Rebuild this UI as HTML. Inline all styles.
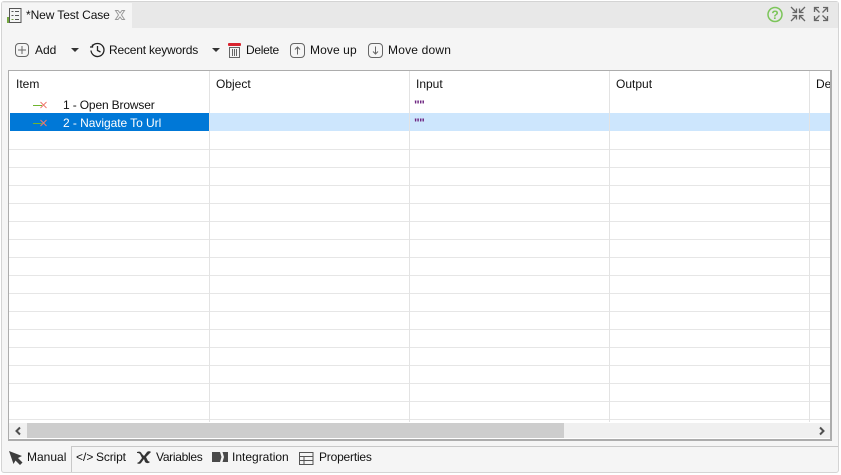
<!DOCTYPE html>
<html><head><meta charset="utf-8"><style>
html,body{margin:0;padding:0}
body{width:841px;height:475px;overflow:hidden;position:relative;background:#fff;font-family:"Liberation Sans",sans-serif;font-size:12px;color:#111}
.a{position:absolute}
.t{position:absolute;white-space:nowrap;line-height:16px;font-size:12px}
svg{position:absolute;overflow:visible}
</style></head><body>
<div class="a" style="left:1px;top:1px;width:838px;height:472px;background:#f5f5f5;border:1px solid #d4d4d4;box-sizing:border-box;border-radius:3px"></div>
<div class="a" style="left:2px;top:2px;width:836px;height:26px;background:#e8e8e8"></div>
<div class="a" style="left:2px;top:3px;width:130px;height:25px;background:#f5f5f5"></div>

<svg style="left:7px;top:8px" width="15" height="16" fill="none" stroke="#555"><rect x="2.500" y=".5" width="11.500" height="14"/><path d="M4.500 3.500h2M4.500 7.500h2M8 3.500h4M8 7.500h4M8 11.500h4"/><path d="M4.500 11.500h2" stroke="#6a9a3a"/><path d="M1 9v6" stroke="#74a83f" stroke-width="2"/></svg>
<div class="t" style="left:26px;top:7px;letter-spacing:-.1px">*New Test Case</div>
<svg style="left:115px;top:10px" width="10" height="10" fill="none" stroke="#999"><path d="M.5.500h2.500l2 2.500 2-2.500h2.500l-3 4.500 3 4.500H7l-2-2.500-2 2.500H.5l3-4.500z"/></svg>

<svg style="left:767px;top:7px" width="16" height="16" fill="none"><circle cx="8" cy="7.500" r="7" stroke="#7cc55a" stroke-width="1.500"/><text x="8" y="12" text-anchor="middle" font-family="Liberation Sans" font-size="12" font-weight="bold" fill="#7cc55a">?</text></svg>
<svg style="left:790px;top:6px" width="16" height="16" fill="none" stroke="#666" stroke-width="1.300"><path d="M1 1l5 5M6.500 2.500v4h-4M15 1l-5 5M9.500 2.500v4h4M1 15l5-5M2.500 9.500h4v4M15 15l-5-5M13.500 9.500h-4v4"/></svg>
<svg style="left:813px;top:6px" width="16" height="16" fill="none" stroke="#666" stroke-width="1.300"><path d="M1.500 6V1.500H6M1.500 1.500l5 5M10 1.500h4.500V6M14.500 1.500l-5 5M1.500 10v4.500H6M1.500 14.500l5-5M14.500 10v4.500H10M14.500 14.500l-5-5"/></svg>

<svg style="left:15px;top:43px" width="14" height="14" fill="none" stroke="#666"><rect x=".5" y=".5" width="13" height="13" rx="3.500"/><path d="M7 3v8M3 7h8"/></svg>
<div class="t" style="left:35px;top:42px">Add</div>
<svg style="left:71px;top:48px" width="7" height="4"><path d="M0 0h8L4 4z" fill="#333"/></svg>
<svg style="left:89px;top:42px" width="17" height="16" fill="none" stroke="#222" stroke-width="1.300"><path d="M3 4.500A6.500 6.500 0 1 1 2 8.500M1 5l2.500 0 0-2.500M8.500 4v4.500l3 1.500"/></svg>
<div class="t" style="left:109px;top:42px;letter-spacing:-.2px">Recent keywords</div>
<svg style="left:212px;top:48px" width="7" height="4"><path d="M0 0h8L4 4z" fill="#333"/></svg>
<svg style="left:228px;top:43px" width="13" height="15" fill="none" stroke="#666"><rect x="0" y="0" width="13" height="3" rx="1" fill="#d9232e" stroke="none"/><path d="M1.500 4.500h10v10h-10zM4.500 6v7M6.500 6v7M8.500 6v7"/></svg>
<div class="t" style="left:246px;top:42px;letter-spacing:-.3px">Delete</div>
<svg style="left:290px;top:43px" width="15" height="15" fill="none" stroke="#666"><rect x=".5" y=".5" width="14" height="14" rx="3.500"/><path d="M7.500 11.500V4M5 6.500l2.500-2.500 2.500 2.500"/></svg>
<div class="t" style="left:310px;top:42px;letter-spacing:.1px">Move up</div>
<svg style="left:368px;top:43px" width="15" height="15" fill="none" stroke="#666"><rect x=".5" y=".5" width="14" height="14" rx="3.500"/><path d="M7.500 3.500V11M5 8.500l2.500 2.500 2.500-2.500"/></svg>
<div class="t" style="left:388px;top:42px;letter-spacing:.2px">Move down</div>

<div class="a" style="left:8px;top:70px;width:824px;height:371px;background:#fff;border:1px solid #acacac;border-width:1px 2px 2px 1px;box-sizing:border-box"></div>
<div class="a" style="left:10px;top:113px;width:199px;height:18px;background:#0078d7"></div>
<div class="a" style="left:209px;top:113px;width:621px;height:18px;background:#cde6fd"></div>

<div class="a" style="left:9px;top:132px;width:821px;height:288px;background:repeating-linear-gradient(#fff 0 17px,#e6e6e6 17px 18px)"></div>
<div class="a" style="left:209px;top:71px;width:1px;height:351px;background:#e3e3e3"></div>
<div class="a" style="left:409px;top:71px;width:1px;height:351px;background:#e3e3e3"></div>
<div class="a" style="left:609px;top:71px;width:1px;height:351px;background:#e3e3e3"></div>
<div class="a" style="left:809px;top:71px;width:1px;height:351px;background:#e3e3e3"></div>

<div class="t" style="left:16px;top:76px">Item</div>
<div class="t" style="left:216px;top:76px">Object</div>
<div class="t" style="left:416px;top:76px">Input</div>
<div class="t" style="left:616px;top:76px">Output</div>
<div class="t" style="left:816px;top:76px;width:14px;overflow:hidden">De</div>

<svg style="left:33px;top:101px" width="15" height="8" fill="none"><path d="M7.500 1l6 6M13.500 1l-6 6" stroke="#ef7a6e"/><path d="M0 4.500h9" stroke="#6fb52f"/></svg>
<div class="t" style="left:63px;top:97px;letter-spacing:-.15px">1 - Open Browser</div>
<svg style="left:33px;top:119px" width="15" height="8" fill="none"><path d="M0 4.500h9" stroke="#6fb52f"/><path d="M7.500 1l6 6M13.500 1l-6 6" stroke="#ef7a6e"/></svg>
<div class="t" style="left:63px;top:115px;color:#fff;letter-spacing:-.05px">2 - Navigate To Url</div>
<div class="t" style="left:414px;top:97px;color:#6d2580;font-weight:bold;letter-spacing:-.6px">""</div>
<div class="t" style="left:414px;top:115px;color:#6d2580;font-weight:bold;letter-spacing:-.6px">""</div>

<div class="a" style="left:9px;top:423px;width:821px;height:15px;background:#f0f0f0"></div>
<div class="a" style="left:27px;top:423px;width:537px;height:15px;background:#cdcdcd"></div>
<svg style="left:15px;top:427px" width="6" height="8" fill="none" stroke="#505050" stroke-width="2"><path d="M5 .5L1.500 4 5 7.500"/></svg>
<svg style="left:819px;top:427px" width="6" height="8" fill="none" stroke="#505050" stroke-width="2"><path d="M1 .5L4.500 4 1 7.500"/></svg>

<div class="a" style="left:72px;top:446px;width:766px;height:1px;background:#c8c8c8"></div>
<div class="a" style="left:71px;top:446px;width:1px;height:26px;background:#c8c8c8"></div>
<svg style="left:9px;top:451px" width="14" height="14"><path d="M0 0l13 5-4 2 4.500 4.500-2.500 2.500L6.500 9.500 4.500 13z" fill="#3c3c3c"/></svg>
<div class="t" style="left:27px;top:449px">Manual</div>
<div class="t" style="left:76px;top:449px">&lt;/&gt;</div>
<div class="t" style="left:96px;top:449px;letter-spacing:-.15px">Script</div>
<svg style="left:137px;top:451px" width="14" height="13"><path d="M0 1c3-1 4 0 5 2l2 2 3-4c1-1 3-1 4 0l-2 2-3 3 2 4 2 1c-2 2-4 1-5 0L7 8l-3 4c-1 1-3 1-4 0l2-1 3-4-2-4C2 2 1 2 0 2z" fill="#333"/></svg>
<div class="t" style="left:156px;top:449px;letter-spacing:-.3px">Variables</div>
<svg style="left:212px;top:452px" width="16" height="10"><path d="M0 0h16v10H0zM8 0l2.500 0 1.500 5-1.500 5H8l1.500-5z" fill="#4a4a4a" fill-rule="evenodd"/></svg>
<div class="t" style="left:232px;top:449px">Integration</div>
<svg style="left:299px;top:452px" width="15" height="13" fill="none" stroke="#555"><path d="M.5.500h13.500v12H.5zM.5 4.500h13.500M.5 8.500h13.500M5 4.500v8"/></svg>
<div class="t" style="left:319px;top:449px;letter-spacing:-.2px">Properties</div>
</body></html>
